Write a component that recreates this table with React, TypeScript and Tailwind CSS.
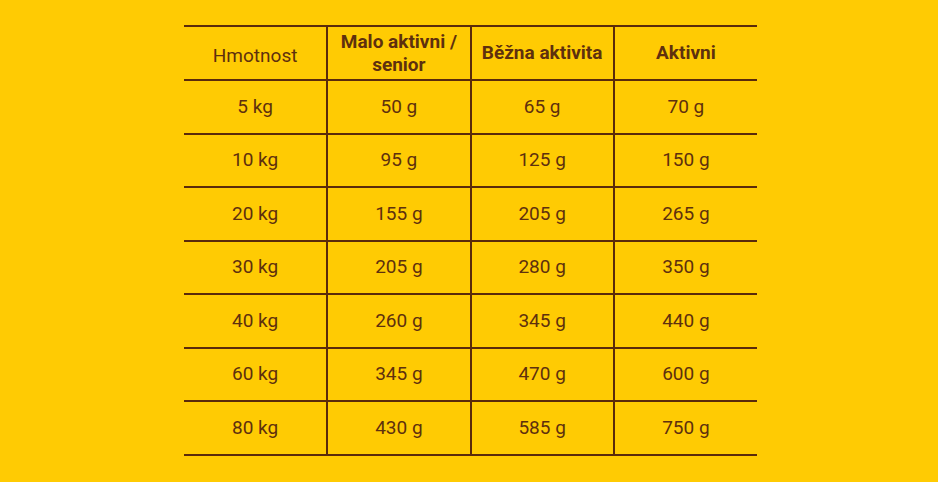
import React from 'react';

const rows = [
  ['5 kg', '50 g', '65 g', '70 g'],
  ['10 kg', '95 g', '125 g', '150 g'],
  ['20 kg', '155 g', '205 g', '265 g'],
  ['30 kg', '205 g', '280 g', '350 g'],
  ['40 kg', '260 g', '345 g', '440 g'],
  ['60 kg', '345 g', '470 g', '600 g'],
  ['80 kg', '430 g', '585 g', '750 g'],
];

function App() {
  return (
    <div
      className="w-[938px] h-[482px] bg-[#ffcb03] flex pl-[184px] pt-[25px] text-[#5e300e]"
      style={{ fontFamily: 'Roboto, "Liberation Sans", sans-serif' }}
    >
      <table className="border-collapse w-[573px] h-[430px] table-fixed text-[19px]">
        <thead>
          <tr className="h-[54px] border-y-2 border-[#5a2a0b]">
            <th className="font-normal pt-[6px] px-1">Hmotnost</th>
            <th className="font-bold leading-[23px] px-2 border-l-2 border-[#5a2a0b]">
              Malo aktivni / senior
            </th>
            <th className="font-bold px-0 border-l-2 border-[#5a2a0b]">Běžna aktivita</th>
            <th className="font-bold px-2 border-l-2 border-[#5a2a0b]">Aktivni</th>
          </tr>
        </thead>
        <tbody>
          {rows.map((row) => (
            <tr key={row[0]} className="h-[53.5px] border-b-2 border-[#5a2a0b]">
              {row.map((cell, i) => (
                <td
                  key={i}
                  className={
                    i === 0
                      ? 'text-center'
                      : 'text-center border-l-2 border-[#5a2a0b]'
                  }
                >
                  {cell}
                </td>
              ))}
            </tr>
          ))}
        </tbody>
      </table>
    </div>
  );
}

export default App;
